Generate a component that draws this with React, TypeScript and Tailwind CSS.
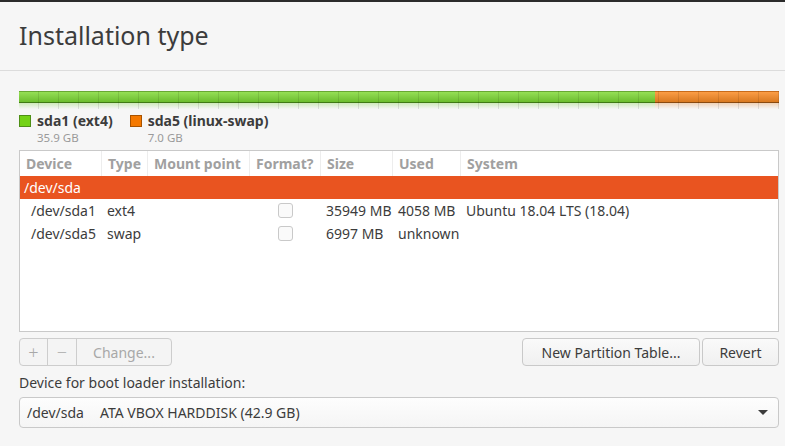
const cols = [
  { label: "Device", w: 82 },
  { label: "Type", w: 46 },
  { label: "Mount point", w: 102 },
  { label: "Format?", w: 71 },
  { label: "Size", w: 72 },
  { label: "Used", w: 68 },
  { label: "System", w: 0 },
];

const parts = [
  { dev: "/dev/sda1", type: "ext4", size: "35949 MB", used: "4058 MB", system: "Ubuntu 18.04 LTS (18.04)" },
  { dev: "/dev/sda5", type: "swap", size: "6997 MB", used: "unknown", system: "" },
];

const Checkbox = () => (
  <div className="w-[15px] h-[15px] rounded-[3px] border border-[#c9c9c9] bg-[#fafafa]" />
);

const App = () => {
  return (
    <div className="w-[785px] h-[446px] bg-[#f6f6f6] text-[#3c3c3c] overflow-hidden font-['Noto_Sans',sans-serif] text-[14px]">
      <div className="h-[2px] bg-[#2b2b2b]" />
      <div className="h-[69px] border-b border-[#dcdcdc] flex items-center pl-[19px] pb-[2px]">
        <h1 className="text-[25px] leading-none text-[#3c3c3c]">Installation type</h1>
      </div>

      <div className="pl-[19px] pr-[6px]">
        {/* partition bar */}
        <div className="mt-[20px] relative">
          <div className="flex h-[12px]">
            <div className="w-[636px] bg-gradient-to-b from-[#95df55] to-[#6cbd2d] border-t border-[#68a833] border-b border-b-[#3f7a14]" />
            <div className="flex-1 bg-gradient-to-b from-[#fb9d45] to-[#d9791f] border-t border-[#c86b1a] border-b border-b-[#8a4a0f]" />
          </div>
          <div className="absolute inset-0 bg-[repeating-linear-gradient(90deg,transparent_0px,transparent_19px,rgba(0,0,0,0.1)_19px,rgba(0,0,0,0.1)_20px)]" />
          <div className="flex h-[6px]">
            <div className="w-[636px] bg-gradient-to-b from-[#cfe9bb] to-transparent" />
            <div className="flex-1 bg-gradient-to-b from-[#efd2b8] to-transparent" />
          </div>
        </div>

        {/* legend */}
        <div className="flex gap-[17px] mt-[4px] h-[37px]">
          <div className="flex gap-[6px]">
            <div className="w-[12px] h-[12px] mt-[2px] bg-[#73d216] border border-[#4e8f16]" />
            <div className="flex flex-col">
              <span className="font-bold leading-[16px] text-[#3c3c3c]">sda1 (ext4)</span>
              <span className="text-[11.5px] leading-[16px] mt-[1px] text-[#9a9a9a]">35.9 GB</span>
            </div>
          </div>
          <div className="flex gap-[6px]">
            <div className="w-[12px] h-[12px] mt-[2px] bg-[#f57900] border border-[#a85300]" />
            <div className="flex flex-col">
              <span className="font-bold leading-[16px] text-[#3c3c3c]">sda5 (linux-swap)</span>
              <span className="text-[11.5px] leading-[16px] mt-[1px] text-[#9a9a9a]">7.0 GB</span>
            </div>
          </div>
        </div>

        {/* table */}
        <div className="h-[182px] border border-[#c9c9c9] bg-white">
          <div className="flex h-[25px] text-[#a0a0a0] font-bold">
            {cols.map((c, i) => (
              <div
                key={c.label}
                className={
                  (c.w ? "" : "flex-1 ") +
                  "flex items-center pl-[6px] " +
                  (i < cols.length - 1 ? "border-r border-[#ededed]" : "")
                }
                style={c.w ? { width: c.w } : undefined}
              >
                {c.label}
              </div>
            ))}
          </div>
          <div className="h-[23px] bg-[#e95420] text-white flex items-center pl-[4px]">/dev/sda</div>
          {parts.map((p) => (
            <div key={p.dev} className="flex h-[23px] items-center">
              <div className="w-[82px] pl-[11px]">{p.dev}</div>
              <div className="w-[46px] pl-[5px]">{p.type}</div>
              <div className="w-[102px]" />
              <div className="w-[71px] flex justify-center">
                <Checkbox />
              </div>
              <div className="w-[72px] pl-[5px]">{p.size}</div>
              <div className="w-[68px] pl-[5px]">{p.used}</div>
              <div className="flex-1 pl-[5px]">{p.system}</div>
            </div>
          ))}
        </div>

        {/* buttons */}
        <div className="flex justify-between mt-[6px]">
          <div className="flex h-[28px] border border-[#cdcdcd] rounded-[4px] bg-[#f4f4f4] text-[#a8a8a8]">
            <div className="w-[28px] flex items-center justify-center border-r border-[#cdcdcd] text-[18px] font-light">+</div>
            <div className="w-[29px] flex items-center justify-center border-r border-[#cdcdcd] text-[18px] font-light">−</div>
            <div className="w-[94px] flex items-center justify-center">Change...</div>
          </div>
          <div className="flex gap-[2px]">
            <button className="h-[28px] w-[178px] border border-[#c9c9c9] rounded-[4px] bg-gradient-to-b from-[#fafafa] to-[#f0f0f0] text-[#3c3c3c]">
              New Partition Table...
            </button>
            <button className="h-[28px] w-[77px] border border-[#c9c9c9] rounded-[4px] bg-gradient-to-b from-[#fafafa] to-[#f0f0f0] text-[#3c3c3c]">
              Revert
            </button>
          </div>
        </div>

        <div className="mt-[7px] leading-[20px]">Device for boot loader installation:</div>

        <div className="mt-[4px] h-[31px] border border-[#c9c9c9] rounded-[4px] bg-gradient-to-b from-[#fdfdfd] to-[#f5f5f5] flex items-center pl-[7px] pr-[10px]">
          <span>/dev/sda</span>
          <span className="ml-[16px] flex-1">ATA VBOX HARDDISK (42.9 GB)</span>
          <svg width="10" height="6" viewBox="0 0 10 6">
            <path d="M0 0 L10 0 L5 5 Z" fill="#3c3c3c" />
          </svg>
        </div>
      </div>
    </div>
  );
};

export default App;
